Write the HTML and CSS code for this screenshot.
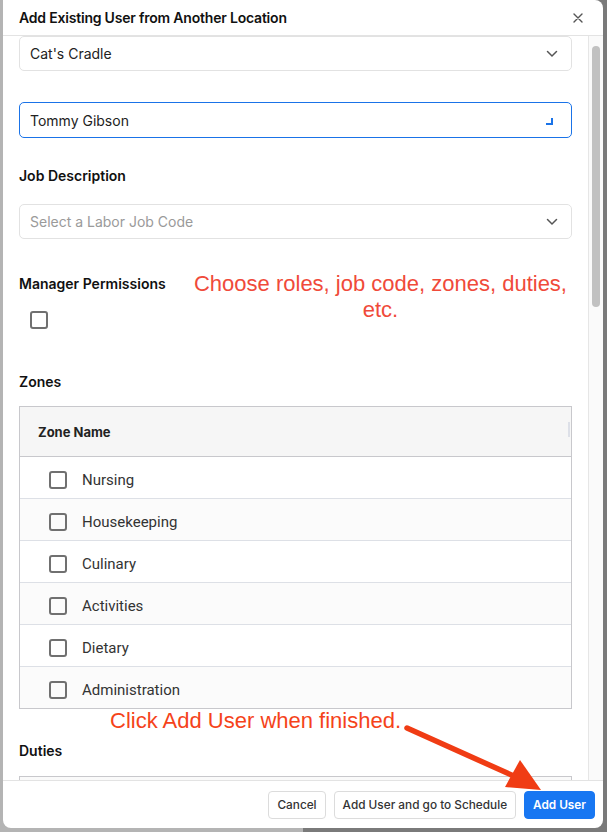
FILE: index.html
```html
<!DOCTYPE html>
<html lang="en">

<head>
    <meta charset="UTF-8">
    <meta name="viewport" content="width=device-width, initial-scale=1.0">
    <title>Add Existing User</title>
    <link rel="stylesheet" href="styles.css">
</head>

<body>
    <div class="modal">
        <div class="modal-header">
            <span class="modal-title">Add Existing User from Another Location</span>
            <svg class="close" width="10" height="10" viewBox="0 0 10 10">
                <path d="M1 1 L9 9 M9 1 L1 9" stroke="#555" stroke-width="1.4" stroke-linecap="round" />
            </svg>
        </div>

        <div class="modal-body">
            <div class="content">
                <div class="select">
                    <span>Cat's Cradle</span>
                    <svg class="chevron" width="12" height="8" viewBox="0 0 12 8">
                        <path d="M1.5 1.5 L6 6 L10.5 1.5" fill="none" stroke="#555" stroke-width="1.5" stroke-linecap="round" />
                    </svg>
                </div>

                <div class="input input-focus">
                    <span>Tommy Gibson</span>
                    <span class="grip"></span>
                </div>

                <div class="label label-job">Job Description</div>
                <div class="select">
                    <span class="placeholder">Select a Labor Job Code</span>
                    <svg class="chevron" width="12" height="8" viewBox="0 0 12 8">
                        <path d="M1.5 1.5 L6 6 L10.5 1.5" fill="none" stroke="#555" stroke-width="1.5" stroke-linecap="round" />
                    </svg>
                </div>

                <div class="label label-manager">Manager Permissions</div>
                <div class="checkbox manager-check"></div>

                <div class="label label-zones">Zones</div>
                <div class="table">
                    <div class="table-head">
                        <span>Zone Name</span>
                        <span class="col-resize"></span>
                    </div>
                    <div class="row"><span class="checkbox"></span>Nursing</div>
                    <div class="row"><span class="checkbox"></span>Housekeeping</div>
                    <div class="row"><span class="checkbox"></span>Culinary</div>
                    <div class="row"><span class="checkbox"></span>Activities</div>
                    <div class="row"><span class="checkbox"></span>Dietary</div>
                    <div class="row"><span class="checkbox"></span>Administration</div>
                </div>

                <div class="label label-duties">Duties</div>
                <div class="table table-duties"></div>
            </div>
            <div class="scrollbar">
                <div class="thumb"></div>
            </div>
        </div>

        <div class="modal-footer">
            <button class="btn">Cancel</button>
            <button class="btn">Add User and go to Schedule</button>
            <button class="btn btn-primary">Add User</button>
        </div>

        <div class="note note-roles">Choose roles, job code, zones, duties,<br>etc.</div>
        <div class="note note-add">Click Add User when finished.</div>
        <svg class="arrow" width="607" height="832" viewBox="0 0 607 832">
            <path d="M407 728 L516 777" stroke="#f03c14" stroke-width="5.5" stroke-linecap="round" />
            <polygon points="505,787 520,760 541,790" fill="#f03c14" />
        </svg>
    </div>
</body>
</html>
```

FILE: styles.css
```css
body {
    margin: 0;
    width: 607px;
    height: 832px;
    overflow: hidden;
    background: linear-gradient(to right, #b4b4b4 0, #b4b4b4 50%, #7a7a7a 50%);
    font-family: Inter, "Noto Sans", sans-serif;
    color: #1c1c1c;
}

.modal {
    position: relative;
    width: 600px;
    height: 828px;
    margin-left: 3px;
    background: #ffffff;
    border-radius: 0 8px 8px 8px;
    display: flex;
    flex-direction: column;
    overflow: hidden;
}

.modal-header {
    height: 35px;
    flex-shrink: 0;
    border-bottom: 1px solid #e3e3e3;
    display: flex;
    align-items: center;
    justify-content: space-between;
    padding: 0 20px 0 16px;
}

.modal-title {
    font-size: 14px;
    font-weight: 600;
    letter-spacing: -0.2px;
    color: #111;
}

.modal-body {
    flex: 1;
    display: flex;
    overflow: hidden;
}

.content {
    flex: 1;
    padding: 0 16px;
    overflow: hidden;
}

.scrollbar {
    width: 15px;
    box-sizing: border-box;
    flex-shrink: 0;
    background: #fafafa;
    border-left: 1px solid #e6e6e6;
    padding: 10px 3px 0 3px;
}

.thumb {
    height: 261px;
    background: #c1c1c1;
    border-radius: 4px;
}

.select,
.input {
    height: 35px;
    box-sizing: border-box;
    border: 1px solid #e2e2e2;
    border-radius: 5px;
    display: flex;
    align-items: center;
    justify-content: space-between;
    padding: 0 13px 0 10px;
    font-size: 14px;
    color: #222;
}

.input {
    height: 36px;
    margin-top: 31px;
}

.input-focus {
    border-color: #1a73e8;
    padding-right: 18px;
}

.grip {
    width: 5px;
    height: 5px;
    border-right: 2px solid #1a73e8;
    border-bottom: 2px solid #1a73e8;
    margin-top: 2px;
}

.placeholder {
    color: #9a9a9a;
}

.label {
    font-size: 14px;
    font-weight: 600;
    line-height: 20px;
    color: #111;
}

.label-job {
    margin: 28px 0 18px;
}

.label-manager {
    margin-top: 35px;
}

.label-zones {
    margin: 43px 0 14px;
}

.label-duties {
    margin: 32px 0 15px;
}

.checkbox {
    display: block;
    width: 18px;
    height: 18px;
    box-sizing: border-box;
    border: 2px solid #707070;
    border-radius: 3px;
    flex-shrink: 0;
}

.manager-check {
    margin: 17px 0 0 11px;
}

.table {
    border: 1px solid #c8c8cc;
}

.table-head {
    height: 49px;
    background: #f6f6f6;
    border-bottom: 1px solid #c8c8cc;
    display: flex;
    align-items: center;
    justify-content: space-between;
    padding: 0 1px 0 18px;
    font-size: 13px;
    font-weight: 700;
    color: #222;
}

.col-resize {
    width: 2px;
    height: 15px;
    background: #dde0e8;
    margin-top: -4px;
}

.row {
    display: flex;
    align-items: center;
    gap: 15px;
    padding: 4px 0 0 29px;
    height: 37px;
    font-family: Roboto, "Noto Sans", sans-serif;
    font-size: 15px;
    color: #333;
    border-bottom: 1px solid #dde0e6;
}

.row:nth-child(odd) {
    background: #fbfbfb;
}

.row:last-child {
    border-bottom: 0;
}

.table-duties {
    height: 40px;
    background: #fafafa;
}

.modal-footer {
    height: 47px;
    flex-shrink: 0;
    border-top: 1px solid #e3e3e3;
    display: flex;
    align-items: center;
    justify-content: flex-end;
    gap: 8px;
    padding-right: 8px;
}

.btn {
    height: 28px;
    padding: 0 8px;
    background: #ffffff;
    border: 1px solid #dcdcdc;
    border-radius: 4px;
    font-family: Inter, "Noto Sans", sans-serif;
    font-size: 11.8px;
    font-weight: 500;
    color: #333;
    cursor: pointer;
}

.btn-primary {
    background: #1877f2;
    border-color: #1877f2;
    color: #ffffff;
    font-weight: 600;
}

.note {
    position: absolute;
    font-family: "Liberation Sans", Arial, sans-serif;
    font-size: 22px;
    line-height: 26px;
}

.note-roles {
    left: 181px;
    top: 271px;
    width: 393px;
    text-align: center;
    color: #f04a3a;
}

.note-add {
    left: 107px;
    top: 708px;
    color: #f5431a;
}

.arrow {
    position: absolute;
    left: -3px;
    top: 0;
    pointer-events: none;
}
```
